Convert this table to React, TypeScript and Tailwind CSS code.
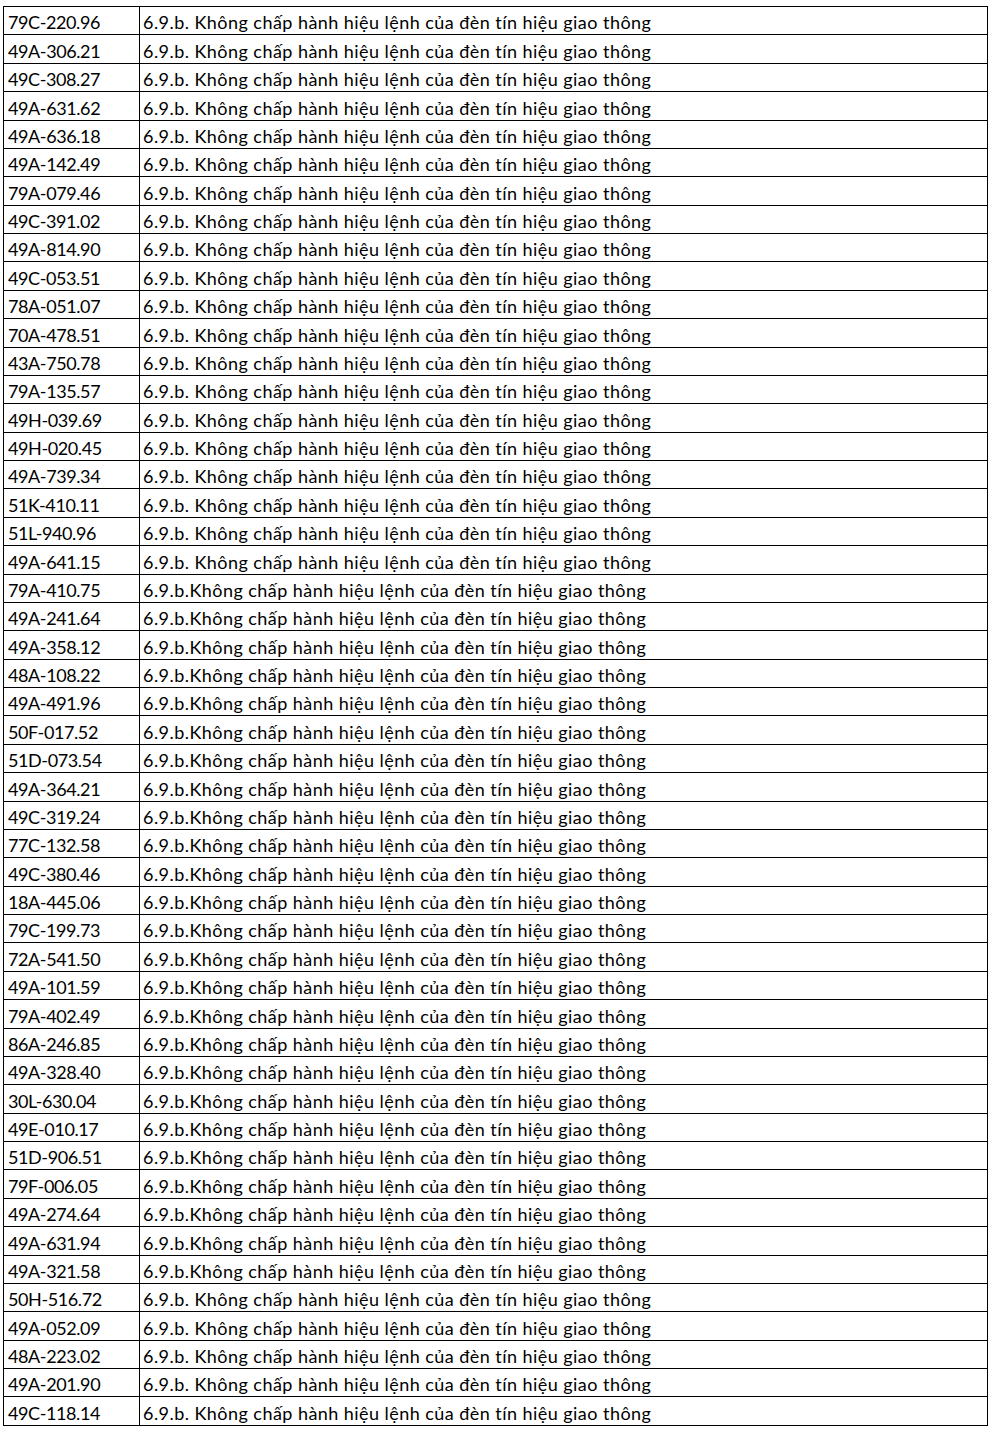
const rows: [string, boolean][] = [
  ['79C-220.96', true],
  ['49A-306.21', true],
  ['49C-308.27', true],
  ['49A-631.62', true],
  ['49A-636.18', true],
  ['49A-142.49', true],
  ['79A-079.46', true],
  ['49C-391.02', true],
  ['49A-814.90', true],
  ['49C-053.51', true],
  ['78A-051.07', true],
  ['70A-478.51', true],
  ['43A-750.78', true],
  ['79A-135.57', true],
  ['49H-039.69', true],
  ['49H-020.45', true],
  ['49A-739.34', true],
  ['51K-410.11', true],
  ['51L-940.96', true],
  ['49A-641.15', true],
  ['79A-410.75', false],
  ['49A-241.64', false],
  ['49A-358.12', false],
  ['48A-108.22', false],
  ['49A-491.96', false],
  ['50F-017.52', false],
  ['51D-073.54', false],
  ['49A-364.21', false],
  ['49C-319.24', false],
  ['77C-132.58', false],
  ['49C-380.46', false],
  ['18A-445.06', false],
  ['79C-199.73', false],
  ['72A-541.50', false],
  ['49A-101.59', false],
  ['79A-402.49', false],
  ['86A-246.85', false],
  ['49A-328.40', false],
  ['30L-630.04', false],
  ['49E-010.17', false],
  ['51D-906.51', false],
  ['79F-006.05', false],
  ['49A-274.64', false],
  ['49A-631.94', false],
  ['49A-321.58', false],
  ['50H-516.72', true],
  ['49A-052.09', true],
  ['48A-223.02', true],
  ['49A-201.90', true],
  ['49C-118.14', true],
];

const violation = 'Không chấp hành hiệu lệnh của đèn tín hiệu giao thông';

export default function App() {
  return (
    <div className="min-h-[1434px] w-[999px] bg-white pt-[6px] pl-[3px] font-['Lato',sans-serif] text-[18px] text-black">
      <table className="w-[985px] border-collapse table-fixed">
        <colgroup>
          <col className="w-[136px]" />
          <col />
        </colgroup>
        <tbody>
          {rows.map(([plate, spaced]) => (
            <tr key={plate} className="h-[28.38px]">
              <td className="border border-black px-[4px] pb-[1px] align-bottom leading-[22px] whitespace-nowrap tracking-[-0.4px]">
                {plate}
              </td>
              <td className="border border-black px-[3px] pb-[1px] align-bottom leading-[22px] whitespace-nowrap tracking-[0.45px]">
                {spaced ? `6.9.b. ${violation}` : `6.9.b.${violation}`}
              </td>
            </tr>
          ))}
        </tbody>
      </table>
    </div>
  );
}
